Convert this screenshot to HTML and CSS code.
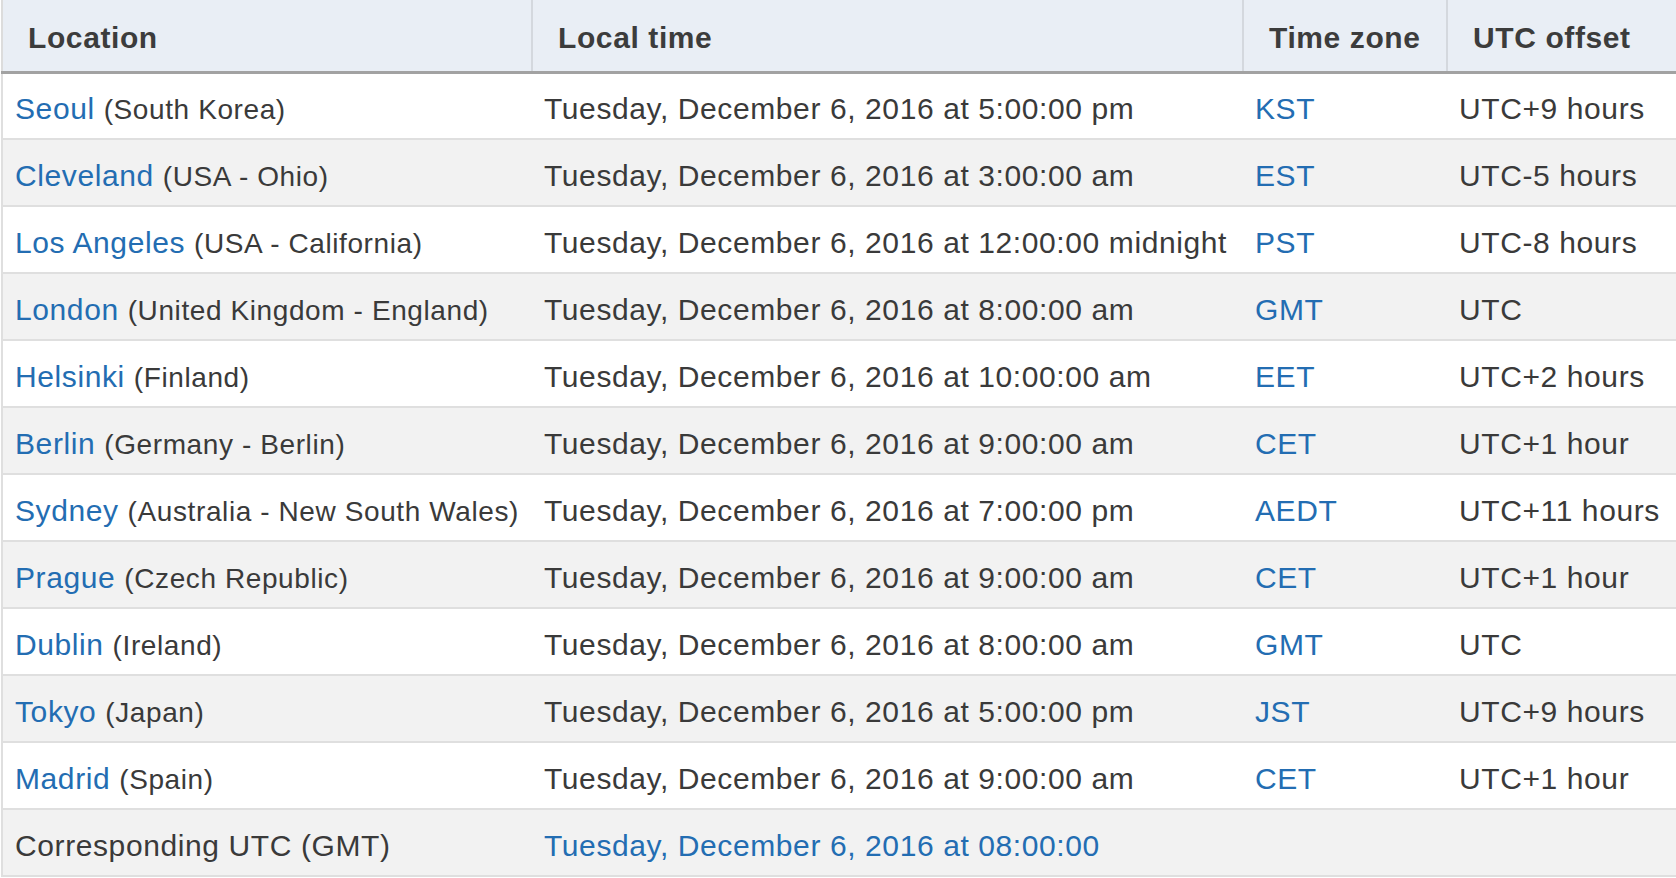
FILE: index.html
```html
<!DOCTYPE html>
<html lang="en">
<head>
  <meta charset="UTF-8" />
  <title>Time Zone Converter</title>
  <link rel="stylesheet" href="styles.css">
</head>
<body>
  <table class="zones">
    <colgroup>
      <col class="col-loc" />
      <col class="col-time" />
      <col class="col-zone" />
      <col class="col-offset" />
    </colgroup>
    <thead>
      <tr>
        <th>Location</th>
        <th>Local time</th>
        <th>Time zone</th>
        <th>UTC offset</th>
      </tr>
    </thead>
    <tbody>
      <tr>
        <td><a href="#">Seoul</a> <span class="region">(South Korea)</span></td>
        <td>Tuesday, December 6, 2016 at 5:00:00 pm</td>
        <td><a href="#">KST</a></td>
        <td>UTC+9 hours</td>
      </tr>
      <tr>
        <td><a href="#">Cleveland</a> <span class="region">(USA - Ohio)</span></td>
        <td>Tuesday, December 6, 2016 at 3:00:00 am</td>
        <td><a href="#">EST</a></td>
        <td>UTC-5 hours</td>
      </tr>
      <tr>
        <td><a href="#">Los Angeles</a> <span class="region">(USA - California)</span></td>
        <td>Tuesday, December 6, 2016 at 12:00:00 midnight</td>
        <td><a href="#">PST</a></td>
        <td>UTC-8 hours</td>
      </tr>
      <tr>
        <td><a href="#">London</a> <span class="region">(United Kingdom - England)</span></td>
        <td>Tuesday, December 6, 2016 at 8:00:00 am</td>
        <td><a href="#">GMT</a></td>
        <td>UTC</td>
      </tr>
      <tr>
        <td><a href="#">Helsinki</a> <span class="region">(Finland)</span></td>
        <td>Tuesday, December 6, 2016 at 10:00:00 am</td>
        <td><a href="#">EET</a></td>
        <td>UTC+2 hours</td>
      </tr>
      <tr>
        <td><a href="#">Berlin</a> <span class="region">(Germany - Berlin)</span></td>
        <td>Tuesday, December 6, 2016 at 9:00:00 am</td>
        <td><a href="#">CET</a></td>
        <td>UTC+1 hour</td>
      </tr>
      <tr>
        <td><a href="#">Sydney</a> <span class="region">(Australia - New South Wales)</span></td>
        <td>Tuesday, December 6, 2016 at 7:00:00 pm</td>
        <td><a href="#">AEDT</a></td>
        <td>UTC+11 hours</td>
      </tr>
      <tr>
        <td><a href="#">Prague</a> <span class="region">(Czech Republic)</span></td>
        <td>Tuesday, December 6, 2016 at 9:00:00 am</td>
        <td><a href="#">CET</a></td>
        <td>UTC+1 hour</td>
      </tr>
      <tr>
        <td><a href="#">Dublin</a> <span class="region">(Ireland)</span></td>
        <td>Tuesday, December 6, 2016 at 8:00:00 am</td>
        <td><a href="#">GMT</a></td>
        <td>UTC</td>
      </tr>
      <tr>
        <td><a href="#">Tokyo</a> <span class="region">(Japan)</span></td>
        <td>Tuesday, December 6, 2016 at 5:00:00 pm</td>
        <td><a href="#">JST</a></td>
        <td>UTC+9 hours</td>
      </tr>
      <tr>
        <td><a href="#">Madrid</a> <span class="region">(Spain)</span></td>
        <td>Tuesday, December 6, 2016 at 9:00:00 am</td>
        <td><a href="#">CET</a></td>
        <td>UTC+1 hour</td>
      </tr>
      <tr class="utc-row">
        <td>Corresponding UTC (GMT)</td>
        <td><a href="#">Tuesday, December 6, 2016 at 08:00:00</a></td>
        <td></td>
        <td></td>
      </tr>
    </tbody>
  </table>
</body>
</html>
```

FILE: styles.css
```css
/* Reset */
* {
  margin: 0;
  padding: 0;
  box-sizing: border-box;
}
body {
  font-family: 'Liberation Sans', Arial, sans-serif;
  background: #fff;
  color: #3a3a3a;
}
.zones {
  margin-left: 1px;
  width: 1675px;
  border-collapse: collapse;
  table-layout: fixed;
  font-size: 30px;
  letter-spacing: 0.6px;
}
.col-loc { width: 530px; }
.col-time { width: 711px; }
.col-zone { width: 204px; }
.col-offset { width: 230px; }
.zones th {
  background: #e9eef5;
  text-align: left;
  font-weight: 700;
  color: #3c3c3c;
  height: 72px;
  padding: 5px 0 0 25px;
  border-left: 2px solid #d4d8de;
  border-bottom: 3px solid #a2a2a2;
}
.zones th:first-child {
  border-left: 2px solid #dcdcdc;
}
.zones td {
  height: 67px;
  padding: 7px 0 0 12px;
  white-space: nowrap;
  border-bottom: 2px solid #dfdfdf;
}
.zones td:first-child {
  border-left: 2px solid #dfdfdf;
}
.zones tbody tr:nth-child(even) td {
  background: #f2f2f2;
}
.zones a {
  color: #236db2;
  text-decoration: none;
}
.region {
  font-size: 28px;
}
```
